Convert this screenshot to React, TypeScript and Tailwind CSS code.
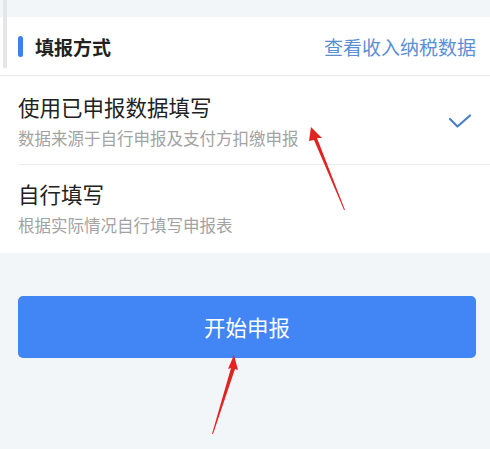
import React from "react";

export default function App() {
  return (
    <div
      className="relative w-[490px] h-[449px] overflow-hidden bg-[#f3f6f9]"
      style={{ fontFamily: '"Noto Sans CJK SC", "Noto Sans", sans-serif' }}
    >
      <div className="absolute left-[3px] top-0 w-[4px] h-[68px] bg-[#e4e6e9]" />
      <div className="h-[17px]" />
      <div className="h-[59px] bg-white border-b border-[#e8eaed] flex items-center justify-between pl-[18px] pr-[14px]">
        <div className="flex items-center">
          <div className="w-[5px] h-[21px] rounded-full bg-[#3f7ff0]" />
          <span className="ml-[12px] text-[19px] font-bold text-[#222] leading-none">填报方式</span>
        </div>
        <span className="text-[19px] text-[#5a8fd3] leading-none">查看收入纳税数据</span>
      </div>
      <div className="bg-white">
        <div className="ml-[18px] h-[89px] border-b border-[#ececec] flex items-center justify-between pr-[18px]">
          <div className="flex flex-col">
            <span className="text-[21.5px] leading-[28px] text-[#222] mt-[2px]">使用已申报数据填写</span>
            <span className="text-[16.5px] leading-[24px] text-[#a3a3a3] mt-[5px]">数据来源于自行申报及支付方扣缴申报</span>
          </div>
          <svg width="24" height="16" viewBox="0 0 24 16" className="mt-[4px]">
            <path d="M2 5 L9.5 12.5 L22 1.5" fill="none" stroke="#4a7fc9" strokeWidth="2.2" strokeLinecap="round" strokeLinejoin="round" />
          </svg>
        </div>
        <div className="ml-[18px] h-[88px] flex flex-col justify-center">
          <span className="text-[21.5px] leading-[28px] text-[#222] mt-[-2px]">自行填写</span>
          <span className="text-[16.5px] leading-[24px] text-[#a3a3a3] mt-[5px]">根据实际情况自行填写申报表</span>
        </div>
      </div>
      <div className="px-[18px] pt-[43px] pr-[14px]">
        <div className="h-[62px] rounded-[5px] bg-[#4285f4] flex items-center justify-center">
          <span className="text-[21.5px] text-white leading-none">开始申报</span>
        </div>
      </div>
      <svg className="absolute left-0 top-0 pointer-events-none" width="490" height="449" viewBox="0 0 490 449">
        <polygon points="311,127 322,138 317,138 345,210 344,210 314,140 309,141" fill="#e3231f" />
        <polygon points="234,355 238,370 235,369 213,434 212,434 231,368 228,369" fill="#e3231f" />
      </svg>
    </div>
  );
}
